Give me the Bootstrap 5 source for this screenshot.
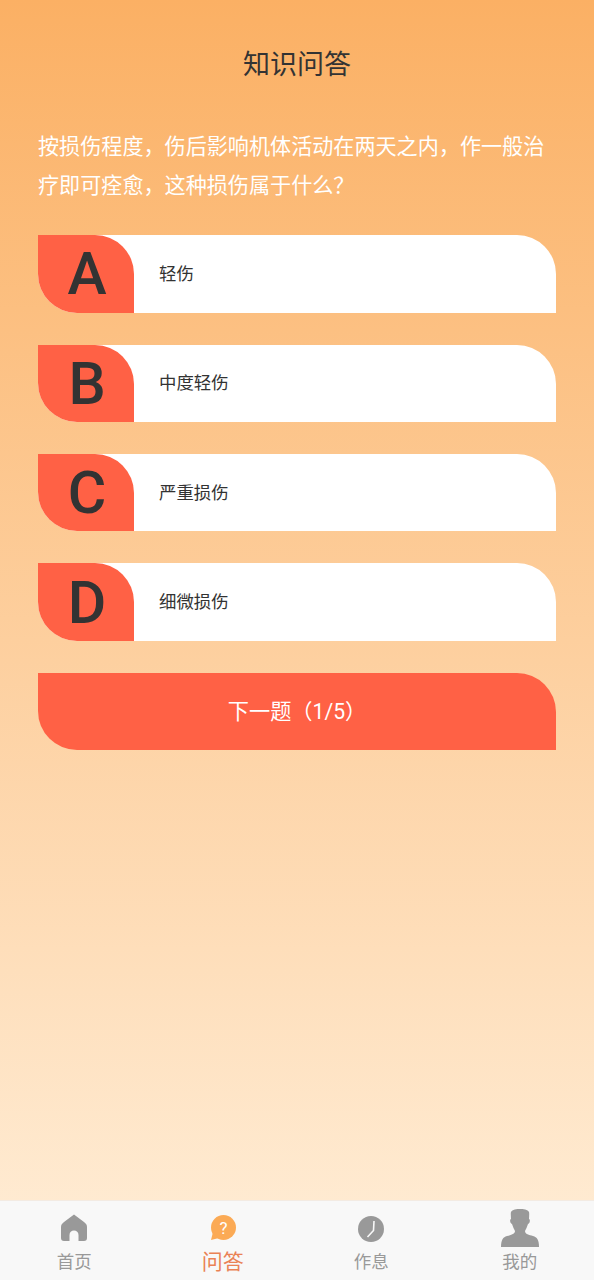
<!doctype html>
<html lang="zh"><head><meta charset="utf-8"><title>知识问答</title>
<link href="https://cdn.jsdelivr.net/npm/bootstrap@5.3.0/dist/css/bootstrap.min.css" rel="stylesheet">
<style>
html,body{height:100%}
body{font-family:Roboto,"Noto Sans CJK SC",sans-serif;background:#fff;color:#333}
.quiz-page{height:1280px;background:linear-gradient(180deg,#fbb064 0%,#ffeed8 100%)}
.quiz-main{padding:0 38px}
.quiz-title{font-size:27px;line-height:38px;padding-top:46px;margin:0 0 43px;font-weight:400;color:#333;text-align:center}
.quiz-q{font-size:21.1px;line-height:39px;color:#fff;margin:0 0 30.2px}
.opt-row{height:77.5px;background:#fff;border-radius:0 39px 0 39px;margin-bottom:31.9px}
.opt-key{width:96px;height:77.5px;background:#ff6145;border-radius:0 39px 0 39px;font-size:59px;font-weight:500;color:#333;line-height:1;padding-left:2px}
.opt-txt{font-size:17.4px;color:#333;padding-left:25px}
.next-go{height:77.5px;background:#ff6145;border-radius:0 39px 0 39px;color:#fff;font-size:21.2px}
.tab-bar{height:80px;background:#f8f8f8;border-top:1px solid #f3ebe3}
.tab-cell{width:148.5px;color:#999;font-size:17.5px;line-height:24px;padding-top:4px}
.tab-on{color:#ea8255;font-size:21px}
.tab-ic{height:45px}
.clock-ic{margin-top:3px}
</style></head><body>
<div class="quiz-page d-flex flex-column">
<div class="quiz-main flex-grow-1">
<h1 class="quiz-title">知识问答</h1>
<p class="quiz-q">按损伤程度，伤后影响机体活动在两天之内，作一般治疗即可痊愈，这种损伤属于什么？</p>
<div class="opt-row d-flex align-items-center"><div class="opt-key d-flex align-items-center justify-content-center">A</div><div class="opt-txt">轻伤</div></div>
<div class="opt-row d-flex align-items-center"><div class="opt-key d-flex align-items-center justify-content-center">B</div><div class="opt-txt">中度轻伤</div></div>
<div class="opt-row d-flex align-items-center"><div class="opt-key d-flex align-items-center justify-content-center">C</div><div class="opt-txt">严重损伤</div></div>
<div class="opt-row d-flex align-items-center"><div class="opt-key d-flex align-items-center justify-content-center">D</div><div class="opt-txt">细微损伤</div></div>
<div class="next-go d-flex align-items-center justify-content-center">下一题（1/5）</div>
</div>
<nav class="tab-bar d-flex">
<div class="tab-cell d-flex flex-column align-items-center"><div class="tab-ic d-flex align-items-center"><svg width="28" height="28" viewBox="0 0 28 28"><path d="M14 .5 4 8C2 9.500 1 11 1 13v11c0 2 1 3 3 3h5.500v-6c0-3 2-4.500 4.500-4.500s4.500 1.500 4.500 4.500v6H24c2 0 3-1 3-3V13c0-2-1-3.500-3-5z" fill="#999"/></svg></div><div>首页</div></div>
<div class="tab-cell tab-on d-flex flex-column align-items-center"><div class="tab-ic d-flex align-items-center"><svg width="26" height="26" viewBox="0 0 26 26"><circle cx="13.500" cy="12.500" r="12.500" fill="#fbaa55"/><path d="M3 17l-2 8 8-2z" fill="#fbaa55"/><text x="13.500" y="18.500" font-size="17" fill="#fff" text-anchor="middle" font-family="Roboto">?</text></svg></div><div>问答</div></div>
<div class="tab-cell d-flex flex-column align-items-center"><div class="tab-ic d-flex align-items-center"><svg class="clock-ic" width="28" height="28" viewBox="0 0 28 28"><circle cx="14" cy="14" r="13" fill="#999"/><path d="M17 6l-.5 9.500-6 6.500" fill="none" stroke="#f8f8f8" stroke-width="1.600"/></svg></div><div>作息</div></div>
<div class="tab-cell d-flex flex-column align-items-center"><div class="tab-ic d-flex align-items-center"><svg width="38" height="38" viewBox="0 0 38 38"><path d="M19 0c3 0 8 .5 9 3 .5 2 0 5 0 7 1.500.5 1 4-1 5-1 3-2 5-3 7 0 3 4 4 8 5 4 1 6 4 6 11H0c0-7 2-10 6-11 4-1 8-2 8-5-1-2-2-4-3-7-2-1-2.500-4.500-1-5 0-2-.5-5 0-7 1-2.500 6-3 9-3z" fill="#999"/></svg></div><div>我的</div></div>
</nav>
</div>
<script src="https://cdn.jsdelivr.net/npm/bootstrap@5.3.0/dist/js/bootstrap.bundle.min.js"></script>
</body></html>
